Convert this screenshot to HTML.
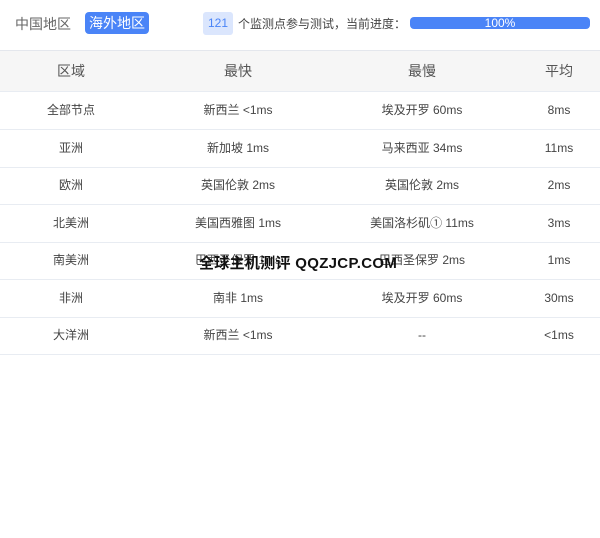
<!DOCTYPE html>
<html><head><meta charset="utf-8"><style>
body{margin:0;width:600px;height:538px;background:#fff;font-family:"Liberation Sans","Noto Sans CJK SC",sans-serif;color:#333;position:relative;overflow:hidden}
.top{position:absolute;top:0;left:0;width:600px;height:50px;border-bottom:1px solid #e4e7ed}
.t1{position:absolute;left:15px;top:14px;font-size:14px;color:#666}
.t2{position:absolute;left:85px;top:12px;height:22px;line-height:22px;padding:0 4px;background:#4a84f7;color:#fff;border-radius:4px;font-size:14px}
.n{position:absolute;left:203px;top:12px;width:30px;height:23px;line-height:23px;text-align:center;background:#dbe6fd;color:#4a84f7;border-radius:3px;font-size:12px}
.t3{position:absolute;left:238px;top:15px;font-size:12px;color:#444}
.bar{position:absolute;left:410px;top:17px;width:180px;height:12px;background:#4a84f7;border-radius:4px;color:#fff;font-size:12px;line-height:12px;text-align:center}
.row{position:absolute;left:0;width:600px;border-bottom:1px solid #e8ecf2;font-size:12px;color:#444}
.row div{position:absolute;top:0;text-align:center;transform:translateX(-50%);white-space:nowrap}
.hd{top:51px;height:40px;background:#f6f6f6;font-size:14px}
.hd div{line-height:40px;color:#555}
.r{height:37px}.r div{line-height:37px}
.wm{position:absolute;left:199px;top:252px;font-size:15px;font-weight:bold;color:#111;letter-spacing:0.3px}
</style></head><body>
<div class="top"><span class="t1">中国地区</span><span class="t2">海外地区</span><span class="n">121</span><span class="t3">个监测点参与测试，当前进度：</span><div class="bar">100%</div></div>
<div class="row hd"><div style="left:71px">区域</div><div style="left:238px">最快</div><div style="left:422px">最慢</div><div style="left:559px">平均</div></div>
<div class="row r" style="top:92px"><div style="left:71px">全部节点</div><div style="left:238px">新西兰 &lt;1ms</div><div style="left:422px">埃及开罗 60ms</div><div style="left:559px">8ms</div></div>
<div class="row r" style="top:130px"><div style="left:71px">亚洲</div><div style="left:238px">新加坡 1ms</div><div style="left:422px">马来西亚 34ms</div><div style="left:559px">11ms</div></div>
<div class="row r" style="top:167px"><div style="left:71px">欧洲</div><div style="left:238px">英国伦敦 2ms</div><div style="left:422px">英国伦敦 2ms</div><div style="left:559px">2ms</div></div>
<div class="row r" style="top:205px"><div style="left:71px">北美洲</div><div style="left:238px">美国西雅图 1ms</div><div style="left:422px">美国洛杉矶① 11ms</div><div style="left:559px">3ms</div></div>
<div class="row r" style="top:242px"><div style="left:71px">南美洲</div><div style="left:238px">巴西圣保罗 1ms</div><div style="left:422px">巴西圣保罗 2ms</div><div style="left:559px">1ms</div></div>
<div class="row r" style="top:280px"><div style="left:71px">非洲</div><div style="left:238px">南非 1ms</div><div style="left:422px">埃及开罗 60ms</div><div style="left:559px">30ms</div></div>
<div class="row r" style="top:317px"><div style="left:71px">大洋洲</div><div style="left:238px">新西兰 &lt;1ms</div><div style="left:422px">--</div><div style="left:559px">&lt;1ms</div></div>
<div class="wm">全球主机测评 QQZJCP.COM</div>
</body></html>
